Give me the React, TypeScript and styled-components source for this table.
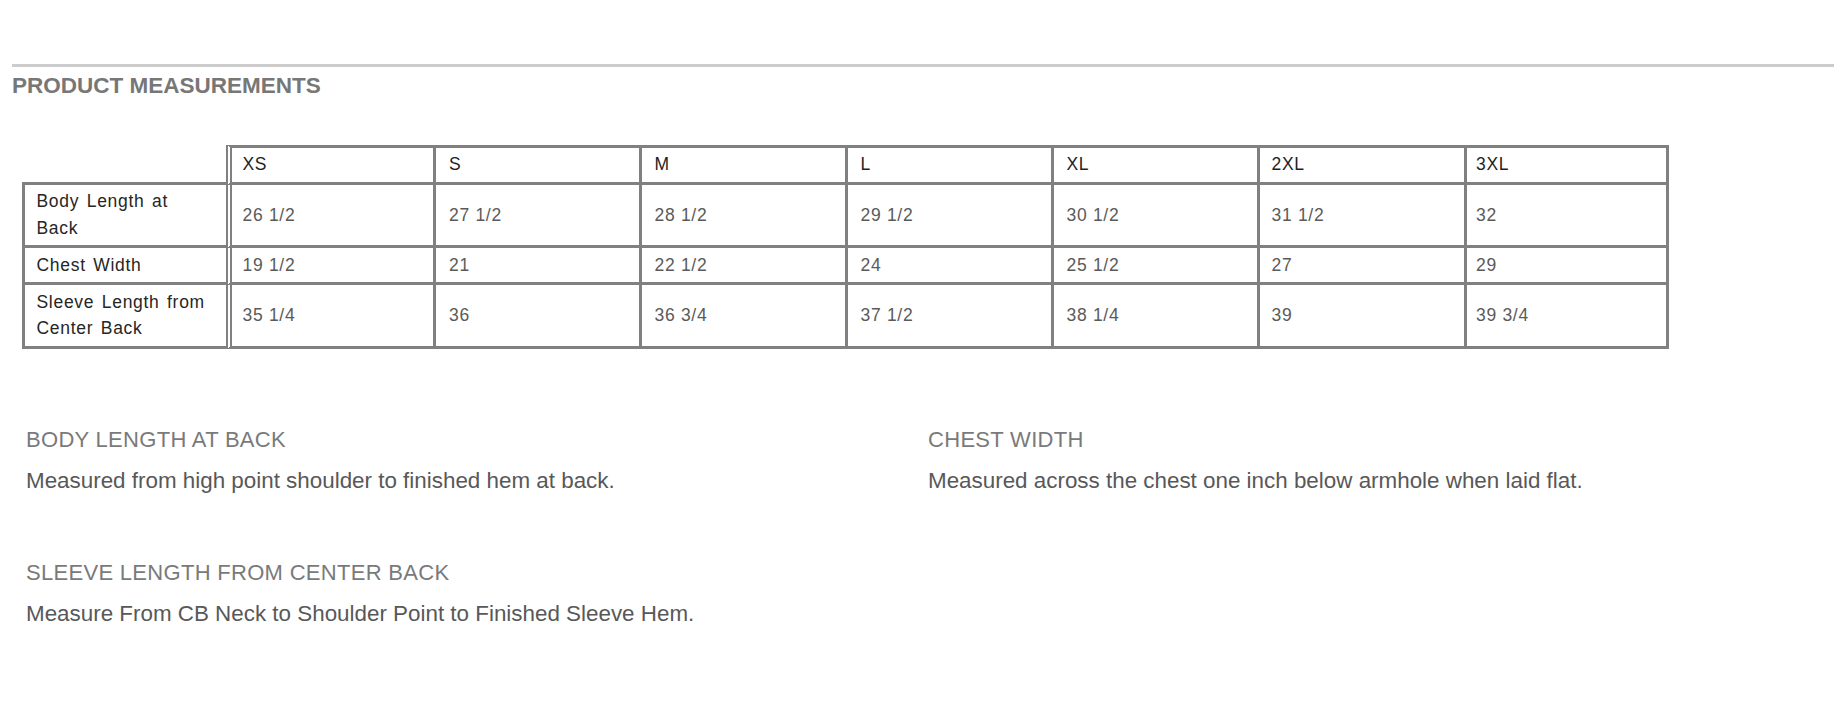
import React from "react";
import styled, { createGlobalStyle } from "styled-components";

const GlobalStyle = createGlobalStyle`
  html, body { margin: 0; padding: 0; background: #ffffff; }
  body { font-family: "Liberation Sans", Arial, Helvetica, sans-serif; }
`;

const Page = styled.div`
  padding: 64px 0 0 12px;
`;

const Rule = styled.hr`
  margin: 0;
  border: 0;
  height: 3px;
  background: #cccccc;
`;

const Title = styled.h2`
  margin: 5.5px 0 0 0;
  font-size: 22.5px;
  line-height: 26px;
  font-weight: 700;
  color: #777777;
`;

const SizeTable = styled.div`
  display: grid;
  grid-template-columns: 204px 210px 206px 206px 206px 206px 207px 202px;
  width: max-content;
  margin: 46px 0 0 10px;
  font-size: 17.5px;
  line-height: 26.5px;
  letter-spacing: 0.7px;
`;

const LINE = "#808080";

const Corner = styled.div`
  border-bottom: 3px solid ${LINE};
`;

const HeadCell = styled.div<{ $first?: boolean; $pad: number }>`
  display: flex;
  align-items: center;
  box-sizing: border-box;
  height: 40px;
  padding-left: ${(p) => p.$pad}px;
  border-top: 3px solid ${LINE};
  border-right: 3px solid ${LINE};
  border-bottom: 3px solid ${LINE};
  border-left: ${(p) => (p.$first ? `6px double ${LINE}` : "0")};
  color: #1f1f1f;
`;

const LabelCell = styled.div`
  padding: 3.75px 16px 3.75px 11.5px;
  border-left: 3px solid ${LINE};
  border-bottom: 3px solid ${LINE};
  color: #262626;
  word-spacing: 2px;
`;

const ValueCell = styled.div<{ $first?: boolean; $pad: number }>`
  display: flex;
  align-items: center;
  padding-left: ${(p) => p.$pad}px;
  border-right: 3px solid ${LINE};
  border-bottom: 3px solid ${LINE};
  border-left: ${(p) => (p.$first ? `6px double ${LINE}` : "0")};
  color: #5a5a5a;
`;

const Notes = styled.div`
  display: grid;
  grid-template-columns: 902px 902px;
  row-gap: 66px;
  margin: 78px 0 0 14px;
`;

const Note = styled.div`
  display: flex;
  flex-direction: column;
  gap: 15px;
`;

const NoteTitle = styled.h3`
  margin: 0;
  font-size: 22px;
  line-height: 26px;
  font-weight: 400;
  color: #7a7a7a;
  letter-spacing: 0.3px;
`;

const NoteText = styled.p`
  margin: 0;
  font-size: 22.4px;
  line-height: 26px;
  color: #585858;
`;

const sizes = ["XS", "S", "M", "L", "XL", "2XL", "3XL"];
const pads = [10.5, 13, 12.5, 12.5, 12.5, 11.5, 9];

const rows: { label: string; values: string[] }[] = [
  {
    label: "Body Length at Back",
    values: ["26 1/2", "27 1/2", "28 1/2", "29 1/2", "30 1/2", "31 1/2", "32"],
  },
  {
    label: "Chest Width",
    values: ["19 1/2", "21", "22 1/2", "24", "25 1/2", "27", "29"],
  },
  {
    label: "Sleeve Length from Center Back",
    values: ["35 1/4", "36", "36 3/4", "37 1/2", "38 1/4", "39", "39 3/4"],
  },
];

const notes = [
  {
    title: "BODY LENGTH AT BACK",
    text: "Measured from high point shoulder to finished hem at back.",
  },
  {
    title: "CHEST WIDTH",
    text: "Measured across the chest one inch below armhole when laid flat.",
  },
  {
    title: "SLEEVE LENGTH FROM CENTER BACK",
    text: "Measure From CB Neck to Shoulder Point to Finished Sleeve Hem.",
  },
];

export default function App() {
  return (
    <>
      <GlobalStyle />
      <Page>
        <Rule />
        <Title>PRODUCT MEASUREMENTS</Title>
        <SizeTable role="table">
          <Corner />
          {sizes.map((s, i) => (
            <HeadCell key={s} $first={i === 0} $pad={pads[i]} role="columnheader">
              {s}
            </HeadCell>
          ))}
          {rows.map((r) => (
            <React.Fragment key={r.label}>
              <LabelCell role="rowheader">{r.label}</LabelCell>
              {r.values.map((v, i) => (
                <ValueCell key={i} $first={i === 0} $pad={pads[i]} role="cell">
                  {v}
                </ValueCell>
              ))}
            </React.Fragment>
          ))}
        </SizeTable>
        <Notes>
          {notes.map((n) => (
            <Note key={n.title}>
              <NoteTitle>{n.title}</NoteTitle>
              <NoteText>{n.text}</NoteText>
            </Note>
          ))}
        </Notes>
      </Page>
    </>
  );
}
